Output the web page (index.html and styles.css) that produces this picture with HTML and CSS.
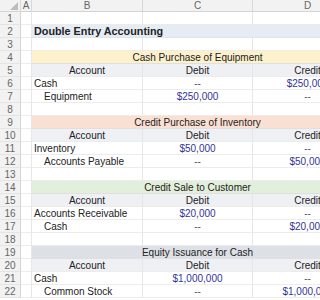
FILE: index.html
```
<!DOCTYPE html>
<html>
<head>
<meta charset="utf-8">
<link rel="stylesheet" href="styles.css">
</head>
<body>
<div class="sheet">
  <div class="row colhead">
    <div class="corner"><span class="tri"></span></div>
    <div class="ch">A</div><div class="ch">B</div><div class="ch">C</div><div class="ch">D</div>
  </div>
  <div class="row"><div class="rn">1</div><div class="c"></div><div class="c"></div><div class="c"></div><div class="c"></div></div>
  <div class="row"><div class="rn">2</div><div class="c"></div><div class="title">Double Entry Accounting</div></div>
  <div class="row"><div class="rn">3</div><div class="c"></div><div class="c"></div><div class="c"></div><div class="c"></div></div>

  <div class="row"><div class="rn">4</div><div class="c"></div><div class="band yellow">Cash Purchase of Equipment</div></div>
  <div class="row hdr"><div class="rn">5</div><div class="c"></div><div class="c mid">Account</div><div class="c mid">Debit</div><div class="c mid">Credit</div></div>
  <div class="row"><div class="rn">6</div><div class="c"></div><div class="c">Cash</div><div class="c mid dash">--</div><div class="c mid num">$250,000</div></div>
  <div class="row"><div class="rn">7</div><div class="c"></div><div class="c ind">Equipment</div><div class="c mid num">$250,000</div><div class="c mid dash">--</div></div>
  <div class="row"><div class="rn">8</div><div class="c"></div><div class="c"></div><div class="c"></div><div class="c"></div></div>

  <div class="row"><div class="rn">9</div><div class="c"></div><div class="band peach">Credit Purchase of Inventory</div></div>
  <div class="row hdr"><div class="rn">10</div><div class="c"></div><div class="c mid">Account</div><div class="c mid">Debit</div><div class="c mid">Credit</div></div>
  <div class="row"><div class="rn">11</div><div class="c"></div><div class="c">Inventory</div><div class="c mid num">$50,000</div><div class="c mid dash">--</div></div>
  <div class="row"><div class="rn">12</div><div class="c"></div><div class="c ind">Accounts Payable</div><div class="c mid dash">--</div><div class="c mid num">$50,000</div></div>
  <div class="row"><div class="rn">13</div><div class="c"></div><div class="c"></div><div class="c"></div><div class="c"></div></div>

  <div class="row"><div class="rn">14</div><div class="c"></div><div class="band green">Credit Sale to Customer</div></div>
  <div class="row hdr"><div class="rn">15</div><div class="c"></div><div class="c mid">Account</div><div class="c mid">Debit</div><div class="c mid">Credit</div></div>
  <div class="row"><div class="rn">16</div><div class="c"></div><div class="c">Accounts Receivable</div><div class="c mid num">$20,000</div><div class="c mid dash">--</div></div>
  <div class="row"><div class="rn">17</div><div class="c"></div><div class="c ind">Cash</div><div class="c mid dash">--</div><div class="c mid num">$20,000</div></div>
  <div class="row"><div class="rn">18</div><div class="c"></div><div class="c"></div><div class="c"></div><div class="c"></div></div>

  <div class="row"><div class="rn">19</div><div class="c"></div><div class="band grey">Equity Issuance for Cash</div></div>
  <div class="row hdr"><div class="rn">20</div><div class="c"></div><div class="c mid">Account</div><div class="c mid">Debit</div><div class="c mid">Credit</div></div>
  <div class="row"><div class="rn">21</div><div class="c"></div><div class="c">Cash</div><div class="c mid num">$1,000,000</div><div class="c mid dash">--</div></div>
  <div class="row"><div class="rn">22</div><div class="c"></div><div class="c ind">Common Stock</div><div class="c mid dash">--</div><div class="c mid num">$1,000,000</div></div>
</div>
</body>
</html>
```
FILE: styles.css
```
html, body {
  margin: 0;
  padding: 0;
  background: #ffffff;
  overflow: hidden;
}
.sheet {
  width: 320px;
  height: 300px;
  overflow: hidden;
  font-family: "Liberation Sans", Arial, sans-serif;
  font-size: 10px;
  color: #222;
}
.row {
  display: grid;
  grid-template-columns: 21px 11px 111px 110px 110px;
  height: 13px;
  width: 363px;
}
.row > div {
  line-height: 13px;
  white-space: nowrap;
  overflow: hidden;
  box-sizing: border-box;
}
.colhead {
  height: 12px;
  background: #f2f2f2;
  border-bottom: 1px solid #d4d4d4;
  box-sizing: border-box;
}
.colhead > div {
  line-height: 11px;
  text-align: center;
  color: #666;
  font-size: 10px;
  border-right: 1px solid #d8d8d8;
}
.corner {
  position: relative;
}
.tri {
  position: absolute;
  right: 2px;
  bottom: 1px;
  width: 0;
  height: 0;
  border-left: 8px solid transparent;
  border-bottom: 8px solid #bdbdbd;
}
.rn {
  background: #f2f2f2;
  color: #666;
  text-align: center;
  border-right: 1px solid #d4d4d4;
  border-bottom: 1px solid #e4e4e4;
  font-size: 10px;
}
.c {
  border-right: 1px solid #e6e6e6;
  border-bottom: 1px solid #ececec;
  padding-left: 2px;
}
.mid {
  text-align: center;
  padding-left: 0;
}
.ind {
  padding-left: 12px;
}
.num {
  color: #33349a;
}
.dash {
  color: #555;
}
.hdr > div:nth-child(n+3) {
  background: #eef0f4;
}
.title {
  grid-column: 3 / 6;
  background: #e6ecf4;
  font-weight: bold;
  font-size: 10.8px;
  padding-left: 2px;
  border-bottom: 1px solid #e0e4ea;
}
.band {
  grid-column: 3 / 6;
  text-align: center;
  border-bottom: 1px solid #e0e0e0;
}
.yellow { background: #fdf1cc; }
.peach { background: #fae0d2; }
.green { background: #e2efda; }
.grey { background: #dde1e7; }
```
